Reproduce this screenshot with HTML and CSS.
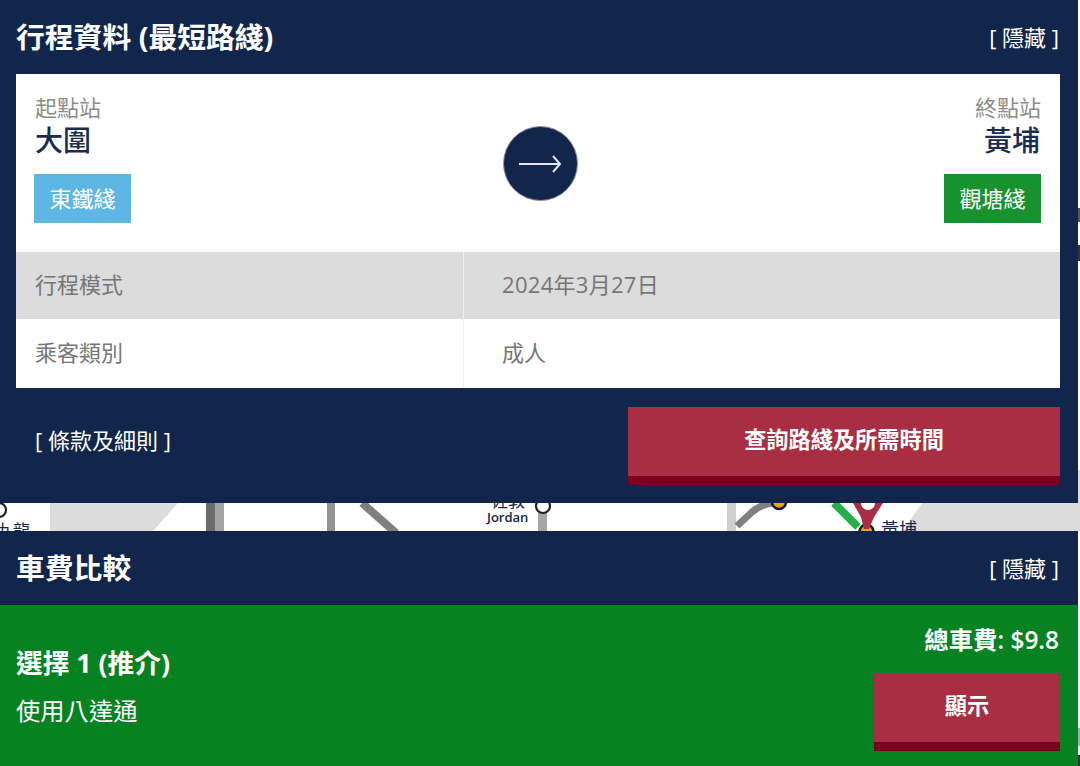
FILE: index.html
```html
<!DOCTYPE html>
<html lang="zh-Hant">
<head>
<meta charset="utf-8">
<title>行程資料</title>
<link rel="stylesheet" href="styles.css">
</head>
<body>
<div class="page">
  <section class="panel trip">
    <header class="panel-head">
      <h2>行程資料 (最短路綫)</h2>
      <a class="toggle">[ 隱藏 ]</a>
    </header>
    <div class="card">
      <div class="route">
        <div class="stop">
          <div class="stop-label">起點站</div>
          <div class="stop-name">大圍</div>
          <div class="line line-blue">東鐵綫</div>
        </div>
        <div class="arrow">
          <svg width="44" height="22" viewBox="0 0 44 22"><path d="M1 11H42M35 3l7 8-7 8" fill="none" stroke="#e4e7ee" stroke-width="2"/></svg>
        </div>
        <div class="stop stop-end">
          <div class="stop-label">終點站</div>
          <div class="stop-name">黃埔</div>
          <div class="line line-green">觀塘綫</div>
        </div>
      </div>
      <div class="row row-grey">
        <div class="cell cell-left">行程模式</div>
        <div class="cell cell-right">2024年3月27日</div>
      </div>
      <div class="row">
        <div class="cell cell-left">乘客類別</div>
        <div class="cell cell-right">成人</div>
      </div>
    </div>
    <div class="trip-foot">
      <a class="terms">[ 條款及細則 ]</a>
      <button class="btn btn-wide">查詢路綫及所需時間</button>
    </div>
  </section>

  <div class="map">
    <svg class="map-art" width="1080" height="28" viewBox="0 0 1080 28">
      <path d="M50 0H178L153 28H50Z" fill="#dcdcdc"/>
      <path d="M922 0H1080V28H903Z" fill="#dcdcdc"/>
      <rect x="206" width="9" height="28" fill="#6c6c6c"/>
      <rect x="215" width="9" height="28" fill="#a4a4a4"/>
      <rect x="327" width="8" height="28" fill="#939393"/>
      <path d="M362 0L396 30" stroke="#808080" stroke-width="8" fill="none"/>
      <rect x="538" y="8" width="9" height="20" fill="#a6a6a6"/>
      <rect x="727" width="9" height="28" fill="#cfcfcf"/>
      <path d="M737 23L752 9Q760 2 772 0" stroke="#808080" stroke-width="7" fill="none"/>
      <circle cx="779" cy="-1" r="7" fill="#e8a800" stroke="#111a33" stroke-width="2.5"/>
      <path d="M834 0L858 24" stroke="#22b04a" stroke-width="8" fill="none"/>
      <circle cx="866.5" cy="28.5" r="7" fill="#e8a800" stroke="#111a33" stroke-width="2.5"/>
      <path d="M853 0H883L874 14L869 26H864L861 14Z" fill="#aa2e43"/>
      <circle cx="868" cy="0" r="7" fill="#fff"/>
      <circle cx="543" cy="3" r="7" fill="#fff" stroke="#222" stroke-width="2.2"/>
      <circle cx="-1" cy="7" r="7" fill="#fff" stroke="#222" stroke-width="2.2"/>
    </svg>
    <span class="map-text map-jordan-zh">佐敦</span>
    <span class="map-text map-jordan">Jordan</span>
    <span class="map-text map-left">九龍</span>
    <span class="map-text map-whampoa">黃埔</span>
  </div>

  <section class="panel fares">
    <header class="panel-head">
      <h2>車費比較</h2>
      <a class="toggle">[ 隱藏 ]</a>
    </header>
    <div class="option">
      <div class="option-info">
        <div class="option-title">選擇 1 (推介)</div>
        <div class="option-desc">使用八達通</div>
      </div>
      <div class="option-side">
        <div class="total">總車費: $9.8</div>
        <button class="btn btn-show">顯示</button>
      </div>
    </div>
  </section>
  <svg class="edge" width="2" height="766" viewBox="0 0 2 766">
    <rect y="208" width="2" height="14" fill="#555"/>
    <rect y="245" width="2" height="16" fill="#333"/>
    <rect y="470" width="2" height="33" fill="#dcdcdc"/>
    <rect y="503" width="2" height="28" fill="#dcdcdc"/>
    <rect y="728" width="2" height="18" fill="#aaa"/>
    <rect y="755" width="2" height="11" fill="#333"/>
  </svg>
</div>
</body>
</html>
```
FILE: styles.css
```css
* { box-sizing: border-box; }
html, body { margin: 0; padding: 0; height: 766px; overflow: hidden; background: #fff; }
body { font-family: "Open Sans", "Noto Sans CJK TC", sans-serif; color: #fff; }
.page { width: 1078px; position: relative; }
.edge { position: absolute; left: 1078px; top: 0; }
.panel { background: #12264b; }
.trip { height: 503px; padding: 0 18px 0 16px; }
.panel-head { height: 74px; display: flex; align-items: center; justify-content: space-between; }
.fares .panel-head { padding: 0 18px 0 16px; }
.panel-head h2 { margin: 0; font-size: 28.8px; font-weight: 700; line-height: 1.2; }
.toggle { font-size: 22px; color: #fff; margin-right: 1px; padding-bottom: 2px; }
.card { width: 1044px; height: 314px; background: #fff; display: flex; flex-direction: column; }
.route { height: 178px; padding: 18px 19px 0 19px; display: flex; justify-content: space-between; }
.stop { display: flex; flex-direction: column; align-items: flex-start; width: 200px; }
.stop-end { align-items: flex-end; }
.stop-label { font-size: 22px; line-height: 30px; color: #8c8c8c; }
.stop-name { font-size: 28px; line-height: 34px; font-weight: 500; color: #1a2c50; margin-top: 1px; }
.stop-end .stop-name { margin-right: 1px; }
.line { margin-top: 17px; height: 49px; width: 97px; padding-bottom: 4px; display: flex; align-items: center; justify-content: center; font-size: 22px; color: #fff; }
.line-blue { background: #5eb6e4; margin-left: -1px; }
.line-green { background: #17922f; }
.arrow { width: 75px; height: 75px; margin-top: 34px; margin-left: 4px; border-radius: 50%; background: #12264b; border: 1px solid #8a93a8; display: flex; align-items: center; justify-content: center; }
.row { flex: 1; display: flex; color: #767676; font-size: 22px; }
.row-grey { background: #dcdcdc; flex: 0 0 67px; }
.row-grey .cell-right { letter-spacing: 0.3px; }
.cell { display: flex; align-items: center; padding-bottom: 6px; }
.cell-left { width: 447px; padding-left: 19px; }
.cell-right { flex: 1; padding-left: 38px; border-left: 1.5px solid #f0f0f0; }
.trip-foot { display: flex; align-items: flex-start; justify-content: space-between; padding: 19px 0 0 19px; width: 1044px; }
.terms { font-size: 22px; line-height: 66px; color: #fff; }
.btn { border: 0; border-bottom: 9px solid #7b0020; background: #a92e44; color: #fff; font-family: inherit; font-weight: 700; font-size: 22.2px; padding: 0 0 6px; }
.btn-wide { width: 432px; height: 78px; }
.map { position: relative; height: 28px; background: #fff; overflow: hidden; width: 1080px; }
.map-art { display: block; }
.map-text { position: absolute; color: #12264b; white-space: nowrap; }
.map-jordan-zh { left: 491px; top: -12px; font-size: 17px; line-height: 20px; }
.map-jordan { left: 487px; top: 6px; font-size: 13px; line-height: 16px; font-weight: 600; }
.map-left { left: -4px; top: 18px; font-size: 17px; line-height: 20px; }
.map-whampoa { left: 881px; top: 16px; font-size: 18px; line-height: 20px; }
.option { height: 161px; background: #078223; display: flex; justify-content: space-between; padding: 0 18px 0 16px; }
.option-info { padding-top: 41px; }
.option-title { font-size: 26.7px; font-weight: 700; line-height: 34px; }
.option-desc { font-size: 24.3px; line-height: 34px; margin-top: 14px; }
.option-side { display: flex; flex-direction: column; align-items: flex-end; padding-top: 18px; }
.total { font-size: 24.4px; font-weight: 600; line-height: 34px; margin-right: 1px; }
.btn-show { width: 186px; height: 78px; margin-top: 16px; }
```
